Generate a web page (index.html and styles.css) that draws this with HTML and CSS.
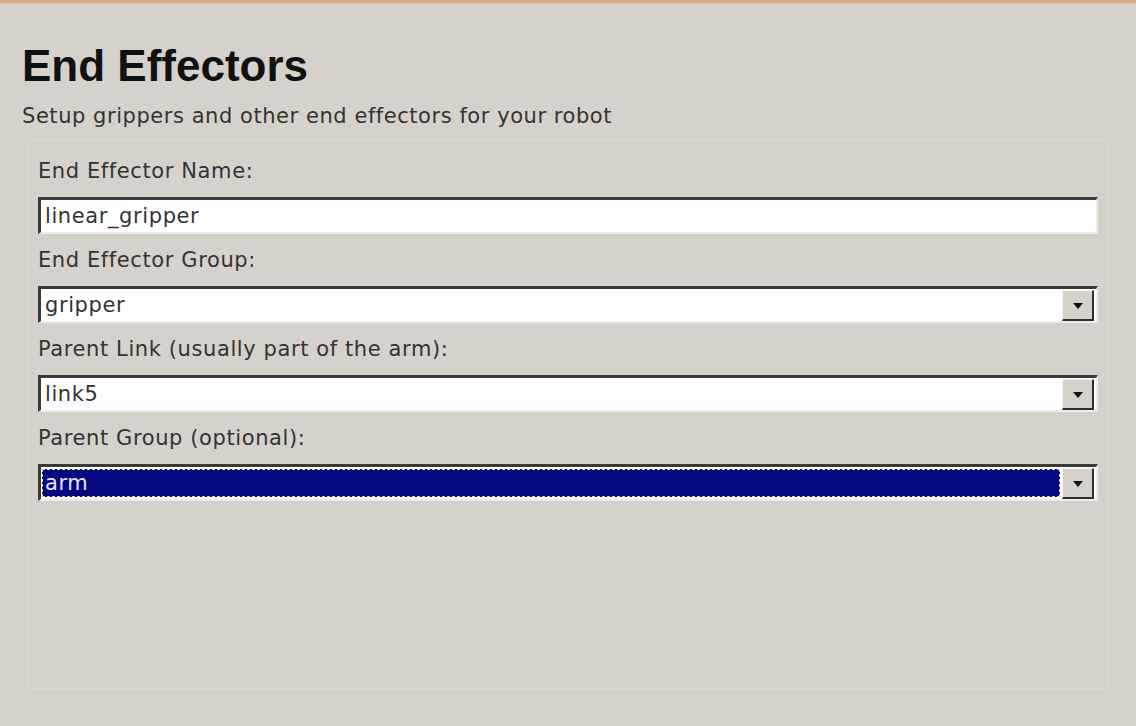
FILE: index.html
```html
<!DOCTYPE html>
<html>
<head>
<meta charset="utf-8">
<link rel="stylesheet" href="styles.css">
</head>
<body>
<div class="topbar"></div>
<div class="page">
  <h1 class="title">End Effectors</h1>
  <p class="subtitle">Setup grippers and other end effectors for your robot</p>
  <div class="panel">
    <div class="label">End Effector Name:</div>
    <div class="field"><span class="value">linear_gripper</span></div>

    <div class="label">End Effector Group:</div>
    <div class="field combo">
      <span class="value">gripper</span>
      <span class="btn"><span class="tri"></span></span>
    </div>

    <div class="label">Parent Link (usually part of the arm):</div>
    <div class="field combo">
      <span class="value">link5</span>
      <span class="btn"><span class="tri"></span></span>
    </div>

    <div class="label">Parent Group (optional):</div>
    <div class="field combo">
      <span class="value selected">arm</span>
      <span class="btn"><span class="tri"></span></span>
    </div>
  </div>
</div>
</body>
</html>
```

FILE: styles.css
```css
html, body {
  margin: 0;
  padding: 0;
}
body {
  background: #d6d2cb;
  width: 1136px;
  height: 726px;
  overflow: hidden;
  font-family: "DejaVu Sans", sans-serif;
  color: #2a2a2a;
}
.topbar {
  height: 3px;
  background: #d9a887;
}
.page {
  padding: 0 22px;
}
.title {
  margin: 41px 0 0 0;
  font-family: "Liberation Sans", Arial, sans-serif;
  font-weight: bold;
  font-size: 44px;
  line-height: 44px;
  color: #111;
}
.subtitle {
  margin: 16px 0 0 0;
  font-size: 21px;
  letter-spacing: 0.55px;
  line-height: 24px;
  color: #333;
}
.panel {
  margin: 11px 6px 0 6px;
  height: 550px;
  border: 1px solid #dcd9d3;
  padding: 5px 9px 0 9px;
  box-sizing: border-box;
}
.label {
  height: 52px;
  display: flex;
  align-items: center;
  font-size: 21px;
  letter-spacing: 0.6px;
  color: #333;
}
.field {
  height: 37px;
  box-sizing: border-box;
  border-style: solid;
  border-width: 3px 2px 2px 3px;
  border-color: #3a3a3a #eeece8 #eeece8 #3a3a3a;
  background: #fff;
  display: flex;
  align-items: center;
  padding: 0 2px 0 1px;
}
.value {
  font-size: 21px;
  letter-spacing: 0.6px;
  color: #333;
  padding-left: 3px;
}
.combo .value {
  flex: 1;
  align-self: stretch;
  display: flex;
  align-items: center;
}
.value.selected {
  background: #03087f;
  color: #e6e6ff;
  margin: 2px 0;
  border: 1px dashed #d9d29a;
  padding-left: 2px;
}
.btn {
  width: 32px;
  height: 31px;
  box-sizing: border-box;
  background: #d6d2cb;
  border-style: solid;
  border-width: 1px 2px 2px 1px;
  border-color: #f4f2ee #2e2e2e #2e2e2e #f4f2ee;
  display: flex;
  align-items: center;
  justify-content: center;
  margin-left: 2px;
}
.tri {
  width: 0;
  height: 0;
  border-left: 5px solid transparent;
  border-right: 5px solid transparent;
  border-top: 6px solid #111;
  margin-top: 2px;
}
```
